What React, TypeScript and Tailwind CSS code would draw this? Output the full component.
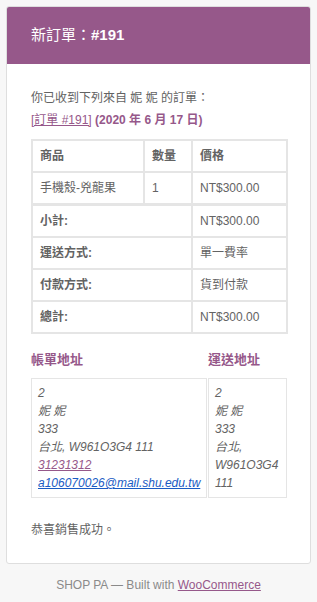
import React from "react"

const font = { fontFamily: '"Liberation Sans", "Noto Sans CJK TC", sans-serif' }

// 訂單明細の行
const items = [{ name: "手機殼-兇龍果", qty: "1", price: "NT$300.00" }]
const totals = [
  { label: "小計:", value: "NT$300.00" },
  { label: "運送方式:", value: "單一費率" },
  { label: "付款方式:", value: "貨到付款" },
  { label: "總計:", value: "NT$300.00" },
]

const cell = "border border-[#e5e5e5] px-[7px] py-[8px] leading-[14px] text-left align-middle"

function AddressBox({ lines, wide }: { lines: React.ReactNode[]; wide?: boolean }) {
  return (
    <div
      className={`${wide ? "w-[176px]" : "w-[79px]"} border border-[#e5e5e5] px-[6px] py-[5px] italic text-[12px] leading-[18px] text-[#636363]`}
    >
      {lines.map((l, i) => (
        <div key={i}>{l}</div>
      ))}
    </div>
  )
}

export default function App() {
  return (
    <div style={font} className="min-h-[602px] w-full bg-[#f7f7f7] pt-[6px] text-[#636363]">
      <div className="mx-[6px] overflow-hidden rounded-[3px] border border-[#dedede] bg-white">
        {/* ヘッダー */}
        <div className="flex h-[57px] items-center bg-[#96588a] px-[24px] text-[15px] text-white">
          新訂單：<span className="font-bold">#191</span>
        </div>

        {/* 本文 */}
        <div className="px-[24px] pt-[23px] pb-[22px] text-[12px]">
          <p className="leading-[22px]">你已收到下列來自 妮 妮 的訂單：</p>
          <p className="leading-[22px] text-[#96588a]">
            <span className="underline">[訂單 #191]</span>{" "}
            <span className="font-bold">(2020 年 6 月 17 日)</span>
          </p>

          <table className="mt-[8px] w-[255px] table-fixed border-separate border-spacing-0 border border-[#e5e5e5]">
            <colgroup>
              <col className="w-[112px]" />
              <col className="w-[48px]" />
              <col className="w-[95px]" />
            </colgroup>
            <thead>
              <tr>
                <th className={`${cell} font-bold`}>商品</th>
                <th className={`${cell} font-bold`}>數量</th>
                <th className={`${cell} font-bold`}>價格</th>
              </tr>
            </thead>
            <tbody>
              {items.map((it) => (
                <tr key={it.name}>
                  <td className={cell}>{it.name}</td>
                  <td className={cell}>{it.qty}</td>
                  <td className={cell}>{it.price}</td>
                </tr>
              ))}
            </tbody>
            <tfoot>
              {totals.map((t, i) => (
                <tr key={t.label}>
                  <th colSpan={2} className={`${cell} font-bold ${i === 0 ? "border-t-[2px]" : ""}`}>
                    {t.label}
                  </th>
                  <td className={`${cell} ${i === 0 ? "border-t-[2px]" : ""}`}>{t.value}</td>
                </tr>
              ))}
            </tfoot>
          </table>

          {/* 住所 */}
          <div className="mt-[17px] flex gap-[1px]">
            <div>
              <h2 className="mb-[9px] text-[13px] font-bold leading-[18px] text-[#96588a]">帳單地址</h2>
              <AddressBox
                wide
                lines={[
                  "2",
                  "妮 妮",
                  "333",
                  "台北, W961O3G4 111",
                  <span className="text-[#96588a] underline">31231312</span>,
                  <span className="text-[#1a5bc4] underline">a106070026@mail.shu.edu.tw</span>,
                ]}
              />
            </div>
            <div className="flex flex-col">
              <h2 className="mb-[9px] text-[13px] font-bold leading-[18px] text-[#96588a]">運送地址</h2>
              <div className="flex flex-1">
                <AddressBox lines={["2", "妮 妮", "333", "台北, W961O3G4 111"]} />
              </div>
            </div>
          </div>

          <p className="mt-[21px] leading-[22px]">恭喜銷售成功。</p>
        </div>
      </div>

      {/* フッター */}
      <div className="pt-[12px] text-center text-[12px] leading-[18px] text-[#8a8a8a]">
        SHOP PA — Built with <span className="text-[#96588a] underline">WooCommerce</span>
      </div>
    </div>
  )
}
